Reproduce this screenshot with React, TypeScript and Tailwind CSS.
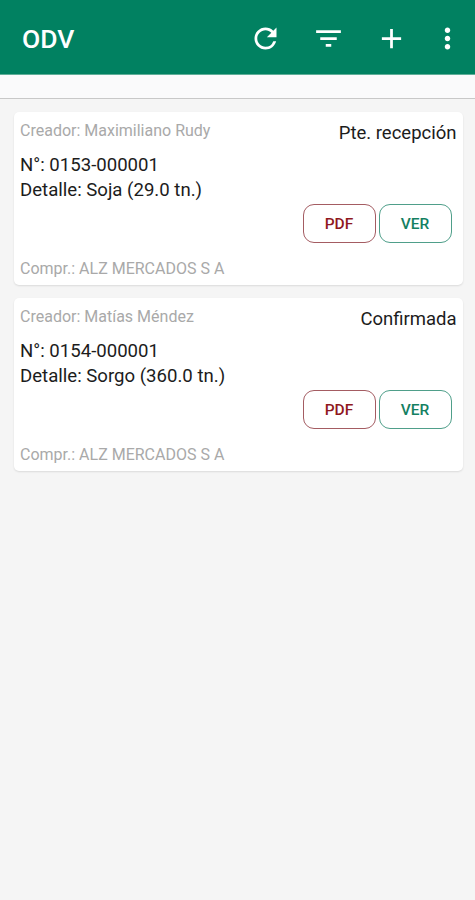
import React from 'react';
import { MdAdd, MdFilterList, MdMoreVert, MdRefresh } from 'react-icons/md';

interface Order {
  creator: string;
  status: string;
  number: string;
  detail: string;
  buyer: string;
}

const ORDERS: Order[] = [
  {
    creator: 'Maximiliano Rudy',
    status: 'Pte. recepción',
    number: '0153-000001',
    detail: 'Soja (29.0 tn.)',
    buyer: 'ALZ MERCADOS S A',
  },
  {
    creator: 'Matías Méndez',
    status: 'Confirmada',
    number: '0154-000001',
    detail: 'Sorgo (360.0 tn.)',
    buyer: 'ALZ MERCADOS S A',
  },
];

function OrderCard({ order }: { order: Order }) {
  return (
    <article className="h-[173px] rounded-[5px] bg-white pl-[6px] pr-[6.5px] shadow-[0_1px_2px_rgba(0,0,0,0.11)]">
      <div className="flex h-[32px] justify-between pt-[8px]">
        <p className="text-[16px] leading-[22px] text-[#a9a9a9]">
          Creador: {order.creator}
        </p>
        <p className="pt-[1px] text-[18.5px] leading-[24px]">{order.status}</p>
      </div>
      <p className="mt-[9px] text-[18.6px] leading-[25px]">N°: {order.number}</p>
      <p className="text-[18.6px] leading-[25px]">Detalle: {order.detail}</p>
      <div className="mt-[1px] flex justify-end gap-[3px] pr-[5px]">
        <button className="h-[39px] w-[73px] rounded-[11px] border border-[#a45c62] pt-[2px] text-[15.5px] font-medium text-[#8f1720]">
          PDF
        </button>
        <button className="h-[39px] w-[73px] rounded-[11px] border border-[#4f9f8a] pt-[2px] text-[15.5px] font-medium text-[#148062]">
          VER
        </button>
      </div>
      <p className="mt-[15px] text-[16px] leading-[22px] text-[#a9a9a9]">
        Compr.: {order.buyer}
      </p>
    </article>
  );
}

export default function App() {
  return (
    <div className="min-h-[900px] w-full bg-[#f5f5f5] font-[Roboto,sans-serif] text-[#1c1c1c]">
      <header className="flex h-[75px] items-center border-b border-[#5fae98] bg-[#018161] pl-[22px] pr-[11px] pt-[2px] text-white">
        <h1 className="flex-1 pt-px text-[26.5px] font-medium">ODV</h1>
        <div className="flex items-center">
          <button aria-label="Actualizar" className="mr-[30px]">
            <MdRefresh size={33} />
          </button>
          <button aria-label="Filtrar" className="mr-[30px]">
            <MdFilterList size={33} />
          </button>
          <button aria-label="Agregar" className="mr-[23px]">
            <MdAdd size={33} />
          </button>
          <button aria-label="Más opciones">
            <MdMoreVert size={33} />
          </button>
        </div>
      </header>
      <div className="h-[24px] border-b border-[#c8c8c8] bg-[#fafafb]" />
      <main className="flex flex-col gap-[13px] pl-[14px] pr-[12px] pt-[13px]">
        {ORDERS.map((order) => (
          <OrderCard key={order.number} order={order} />
        ))}
      </main>
    </div>
  );
}
